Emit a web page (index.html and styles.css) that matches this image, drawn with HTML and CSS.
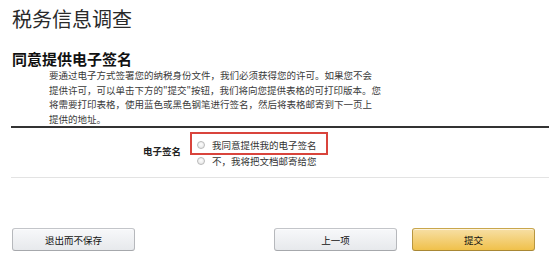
FILE: index.html
```html
<!DOCTYPE html>
<html lang="zh-CN">
<head>
<meta charset="utf-8">
<title>税务信息调查</title>
<link rel="stylesheet" href="styles.css">
</head>
<body>
<div class="page">
  <h1 class="title">税务信息调查</h1>
  <h2 class="section-title">同意提供电子签名</h2>
  <p class="intro">要通过电子方式签署您的纳税身份文件，我们必须获得您的许可。如果您不会<br>提供许可，可以单击下方的"提交"按钮，我们将向您提供表格的可打印版本。您<br>将需要打印表格，使用蓝色或黑色钢笔进行签名，然后将表格邮寄到下一页上<br>提供的地址。</p>
  <div class="form-row">
    <div class="label">电子签名</div>
    <div class="options">
      <label class="option highlight"><span class="radio"></span>我同意提供我的电子签名</label>
      <label class="option second"><span class="radio"></span>不，我将把文档邮寄给您</label>
    </div>
  </div>
  <div class="actions">
    <button class="btn">退出而不保存</button>
    <div class="right-group">
      <button class="btn">上一项</button>
      <button class="btn primary">提交</button>
    </div>
  </div>
</div>
</body>
</html>
```
FILE: styles.css
```css
html, body {
  margin: 0;
  padding: 0;
  background: #ffffff;
}
body {
  font-family: "Noto Sans CJK SC", "Noto Sans", sans-serif;
  color: #222;
}
.page {
  width: 538px;
  padding-left: 11px;
}
.title {
  margin: 9px 0 0 1px;
  font-size: 20px;
  line-height: 20px;
  font-weight: normal;
  color: #2a2a2a;
}
.section-title {
  margin: 22px 0 0 1px;
  font-size: 15px;
  line-height: 16px;
  font-weight: bold;
  color: #111;
}
.intro {
  margin: 1px 0 0 38px;
  font-size: 9.5px;
  line-height: 14.5px;
  color: #3a3a3a;
  white-space: nowrap;
}
.form-row {
  display: grid;
  grid-template-columns: 170px auto;
  column-gap: 9px;
  border-top: 2px solid #333;
  border-bottom: 1px solid #e3e3e3;
  padding: 4px 0 10px;
}
.label {
  text-align: right;
  font-size: 9.5px;
  line-height: 12px;
  font-weight: bold;
  color: #222;
  padding-top: 12.5px;
}
.options {
  display: flex;
  flex-direction: column;
  align-items: flex-start;
}
.option {
  display: flex;
  align-items: center;
  font-size: 9.5px;
  color: #333;
  white-space: nowrap;
}
.highlight {
  border: 2px solid #d9443c;
  padding: 3px 9px 0 5px;
  line-height: 16px;
}
.second {
  line-height: 12px;
  margin-left: 7px;
}
.radio {
  width: 6px;
  height: 6px;
  border: 1px solid #b9b9b9;
  border-radius: 50%;
  background: radial-gradient(circle at 50% 40%, #fdfdfd 0%, #e2e2e2 100%);
  margin-right: 7px;
  flex: none;
}
.actions {
  display: flex;
  justify-content: space-between;
  align-items: center;
  margin-top: 50px;
  padding-right: 14px;
  padding-left: 1px;
}
.right-group {
  display: flex;
  gap: 15px;
}
.btn {
  width: 123px;
  height: 23px;
  border: 1px solid #adb1b8;
  border-color: #c3c5c9 #b6b8bc #a6a8ac;
  border-radius: 3px;
  background: linear-gradient(#f7f8fa, #e7e9ec);
  font-family: "Noto Sans CJK SC", "Noto Sans", sans-serif;
  font-size: 9.5px;
  color: #111;
  padding: 0;
  box-shadow: 0 1px 0 rgba(255,255,255,0.6) inset;
}
.primary {
  background: linear-gradient(#f7dfa5, #f0c14b);
  border-color: #c9a64b #b8963f #a88734;
}
```
